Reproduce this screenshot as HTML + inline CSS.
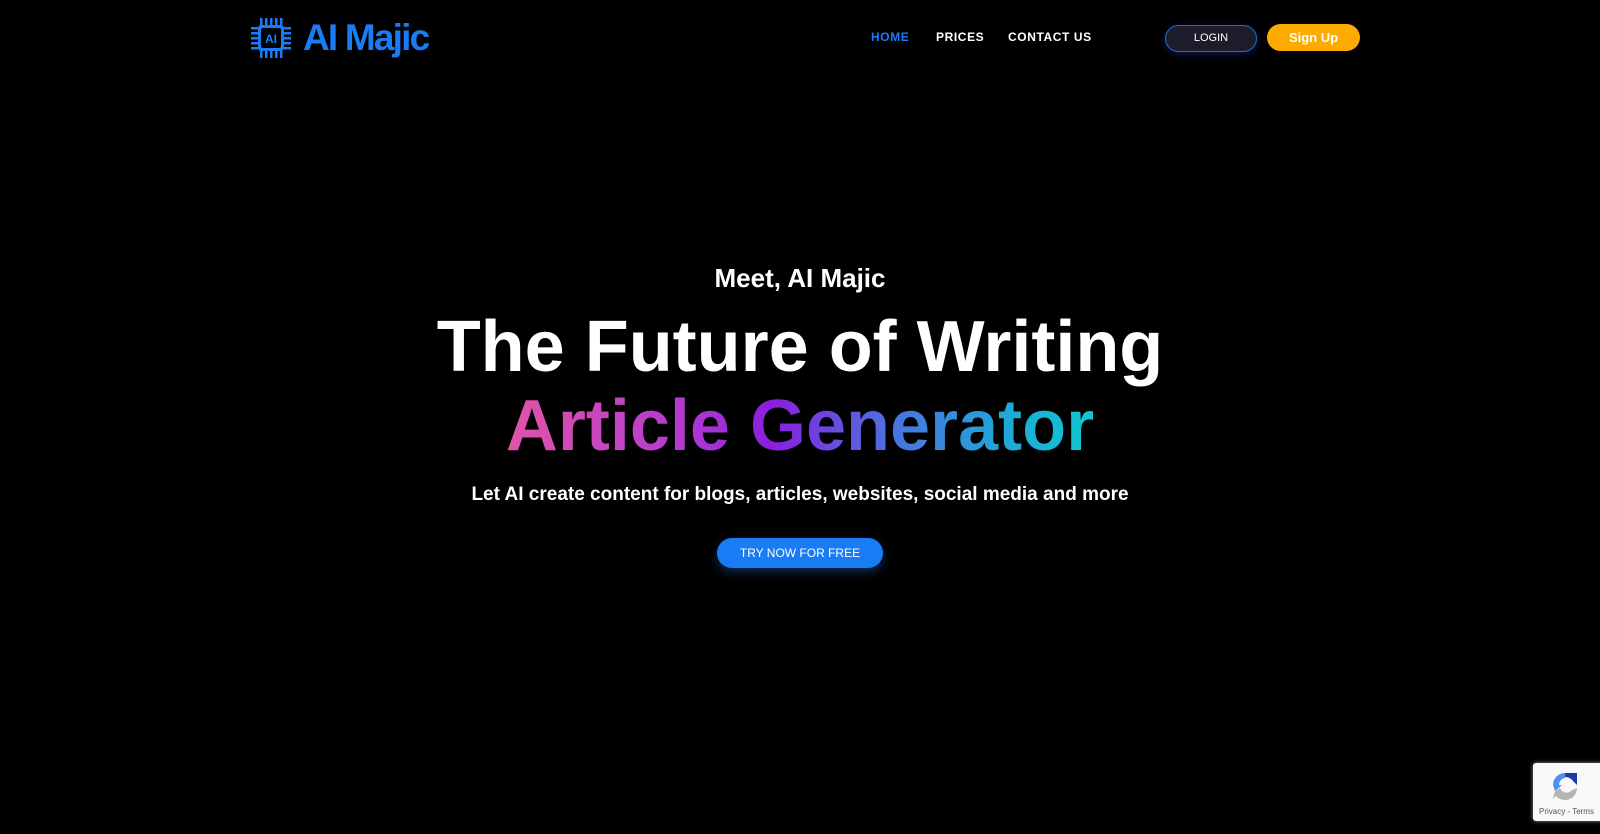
<!DOCTYPE html>
<html><head><meta charset="utf-8"><style>
*{margin:0;padding:0;box-sizing:border-box}
body{width:1600px;height:834px;background:#000;font-family:"Liberation Sans",sans-serif;position:relative;overflow:hidden;color:#fff}
.abs{position:absolute}
.nav a{position:absolute;top:30px;font-size:12px;font-weight:bold;letter-spacing:.6px;color:#fff}
.c{position:absolute;left:0;width:1600px;text-align:center;font-weight:bold;white-space:nowrap}
</style></head><body>
<svg class="abs" style="left:251px;top:18px" width="40" height="40" viewBox="0 0 40 40">
<g fill="#1a7cf5">
<rect x="7" y="7" width="26" height="26" rx="3"/>
<rect x="9" y="0" width="2.5" height="7"/><rect x="14" y="0" width="2.5" height="7"/><rect x="19" y="0" width="2.5" height="7"/><rect x="24" y="0" width="2.5" height="7"/><rect x="29" y="0" width="2.5" height="7"/>
<rect x="9" y="33" width="2.5" height="7"/><rect x="14" y="33" width="2.5" height="7"/><rect x="19" y="33" width="2.5" height="7"/><rect x="24" y="33" width="2.5" height="7"/><rect x="29" y="33" width="2.5" height="7"/>
<rect y="9" x="0" height="2.5" width="7"/><rect y="14" x="0" height="2.5" width="7"/><rect y="19" x="0" height="2.5" width="7"/><rect y="24" x="0" height="2.5" width="7"/><rect y="29" x="0" height="2.5" width="7"/>
<rect y="9" x="33" height="2.5" width="7"/><rect y="14" x="33" height="2.5" width="7"/><rect y="19" x="33" height="2.5" width="7"/><rect y="24" x="33" height="2.5" width="7"/><rect y="29" x="33" height="2.5" width="7"/>
</g>
<rect x="10" y="10" width="20" height="20" rx="2" fill="#000"/>
<text x="20" y="25" font-family="Liberation Sans" font-weight="bold" font-size="12" fill="#1a7cf5" text-anchor="middle">AI</text>
</svg>
<div class="abs" style="left:303px;top:17px;font-size:37px;font-weight:bold;color:#1a7cf5;letter-spacing:-1.8px">AI Majic</div>
<div class="nav">
<a style="left:871px;color:#1a7cf5">HOME</a>
<a style="left:936px">PRICES</a>
<a style="left:1008px">CONTACT US</a>
</div>
<div class="abs" style="left:1165px;top:25px;width:92px;height:27px;border:1.5px solid #1a6ee0;border-radius:14px;background:#1c1c2a;font-size:11px;text-align:center;line-height:24px;box-shadow:0 2px 8px rgba(40,60,200,.4)">LOGIN</div>
<div class="abs" style="left:1267px;top:24px;width:93px;height:27px;border-radius:14px;background:#fdab00;font-size:13px;font-weight:bold;text-align:center;line-height:27px">Sign Up</div>
<div class="c" style="top:263px;font-size:26px">Meet, AI Majic</div>
<div class="c" style="top:307px;font-size:72px;line-height:80px">The Future of Writing</div>
<div class="c" style="top:386px;font-size:72px;line-height:80px"><span style="background:linear-gradient(90deg,#e055a8 0%,#b33ad0 30%,#8a1ee0 45%,#4d70e0 65%,#1da8d8 85%,#10c8d0 100%);-webkit-background-clip:text;background-clip:text;color:transparent">Article Generator</span></div>
<div class="c" style="top:484px;font-size:19px">Let AI create content for blogs, articles, websites, social media and more</div>
<div class="abs" style="left:717px;top:538px;width:166px;height:30px;border-radius:15px;background:#1a7cf5;font-size:12px;text-align:center;line-height:30px;box-shadow:0 4px 10px rgba(26,124,245,.35)">TRY NOW FOR FREE</div>
<div class="abs" style="left:1533px;top:763px;width:80px;height:58px;background:#f9f9f9;border-radius:3px;box-shadow:0 0 4px #888">
<svg style="position:absolute;left:15px;top:6px" width="34" height="34" viewBox="0 0 34 34">
<path d="M17 4 L29 4 L29 16 L25 12 A10 10 0 0 0 17 8Z" fill="#1c3aa9"/>
<path d="M5 16 A12 12 0 0 1 17 4 L17 9 A7 7 0 0 0 11 16 L14 16 L7 22Z" fill="#4a90f5"/>
<path d="M7 22 L12 19 A7 7 0 0 0 24 21 L29 19 A12 12 0 0 1 8 27 L5 30Z" fill="#b5b5b5"/>
</svg>
<div style="position:absolute;left:6px;top:44px;font-size:8px;color:#555">Privacy - Terms</div>
</div>
</body></html>
